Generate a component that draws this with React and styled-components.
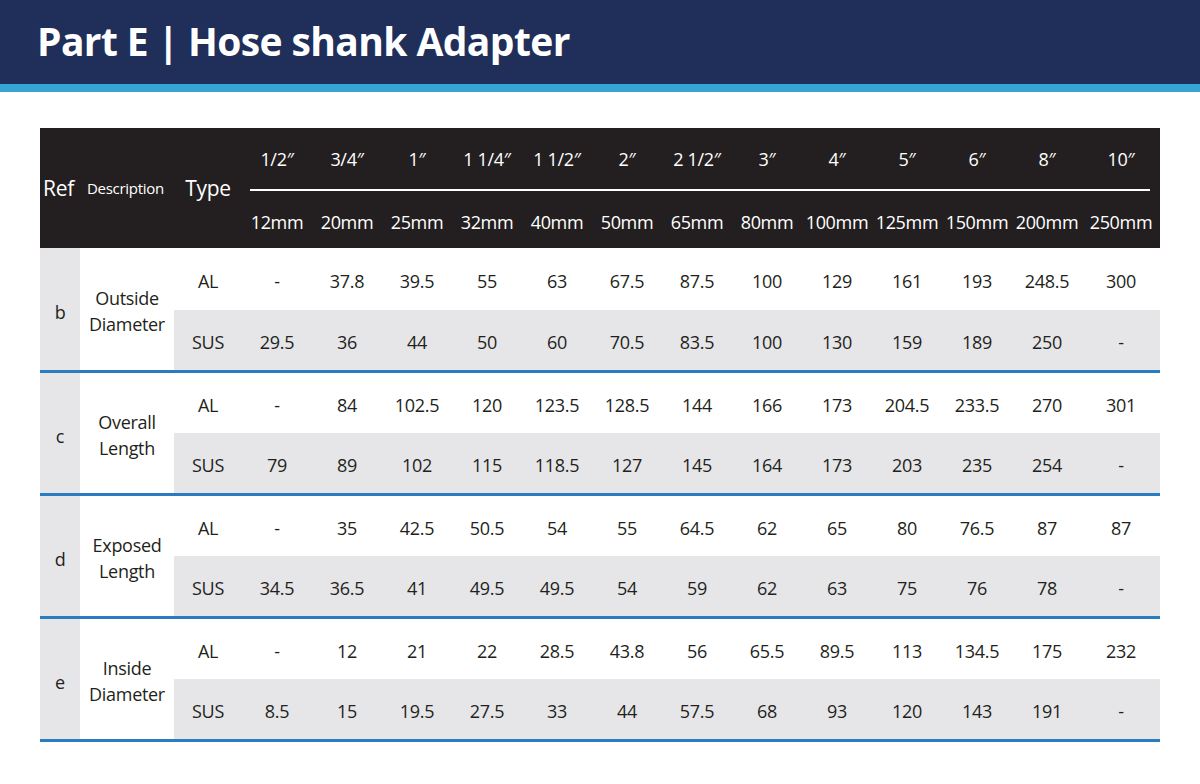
import styled, { createGlobalStyle } from "styled-components";

const GlobalStyle = createGlobalStyle`
  body {
    margin: 0;
    background: #ffffff;
    font-family: "Open Sans", "Noto Sans", sans-serif;
    color: #231f20;
  }
`;

const Page = styled.div`
  width: 1200px;
  min-height: 784px;
  background: #ffffff;
`;

const Banner = styled.header`
  height: 84px;
  background: #1f2f5a;
  border-bottom: 8px solid #34a5d5;
  display: flex;
  align-items: center;
  padding-left: 37px;
`;

const Title = styled.h1`
  margin: 0 0 3px;
  color: #ffffff;
  font-size: 39px;
  font-weight: 700;
  letter-spacing: -0.6px;
`;

const Wrap = styled.div`
  padding: 36px 40px 0;
`;

const Table = styled.table`
  width: 1120px;
  border-collapse: collapse;
  table-layout: fixed;
  font-size: 18px;
  letter-spacing: -0.3px;
`;

const Head = styled.thead`
  background: #231f20;
  color: #ffffff;
`;

const HeadCell = styled.th`
  box-sizing: border-box;
  font-weight: 400;
  font-size: ${(p) => p.$size || 18}px;
  text-align: ${(p) => p.$align || "center"};
  padding: 0;
  padding-left: ${(p) => p.$indent || 0}px;
  padding-top: ${(p) => p.$top || 0}px;
  height: ${(p) => p.$h || "auto"};
  vertical-align: middle;
  white-space: nowrap;
`;

const DividerCell = styled.th`
  padding: 0 10px 0 8px;
  height: 2px;
`;

const Divider = styled.div`
  height: 1.5px;
  background: #ffffff;
`;

const Group = styled.tbody`
  border-bottom: 3px solid #2a7bbf;
`;

const Cell = styled.td`
  box-sizing: border-box;
  padding: 4px 0 0;
  text-align: center;
  vertical-align: middle;
  height: ${(p) => p.$h}px;
  background: ${(p) => (p.$shade ? "#e6e6e8" : "#ffffff")};
  white-space: nowrap;
`;

const RefCell = styled.td`
  background: #e6e6e8;
  text-align: center;
  padding: 6px 0 0;
  font-size: 18px;
`;

const DescCell = styled.td`
  background: #ffffff;
  text-align: center;
  padding: 4px 0 0;
  line-height: 26px;
  font-size: 18px;
`;

const sizes = [
  ["1/2\u2033", "12mm"],
  ["3/4\u2033", "20mm"],
  ["1\u2033", "25mm"],
  ["1 1/4\u2033", "32mm"],
  ["1 1/2\u2033", "40mm"],
  ["2\u2033", "50mm"],
  ["2 1/2\u2033", "65mm"],
  ["3\u2033", "80mm"],
  ["4\u2033", "100mm"],
  ["5\u2033", "125mm"],
  ["6\u2033", "150mm"],
  ["8\u2033", "200mm"],
  ["10\u2033", "250mm"],
];

const groups = [
  {
    ref: "b",
    desc: ["Outside", "Diameter"],
    al: ["-", "37.8", "39.5", "55", "63", "67.5", "87.5", "100", "129", "161", "193", "248.5", "300"],
    sus: ["29.5", "36", "44", "50", "60", "70.5", "83.5", "100", "130", "159", "189", "250", "-"],
  },
  {
    ref: "c",
    desc: ["Overall", "Length"],
    al: ["-", "84", "102.5", "120", "123.5", "128.5", "144", "166", "173", "204.5", "233.5", "270", "301"],
    sus: ["79", "89", "102", "115", "118.5", "127", "145", "164", "173", "203", "235", "254", "-"],
  },
  {
    ref: "d",
    desc: ["Exposed", "Length"],
    al: ["-", "35", "42.5", "50.5", "54", "55", "64.5", "62", "65", "80", "76.5", "87", "87"],
    sus: ["34.5", "36.5", "41", "49.5", "49.5", "54", "59", "62", "63", "75", "76", "78", "-"],
  },
  {
    ref: "e",
    desc: ["Inside", "Diameter"],
    al: ["-", "12", "21", "22", "28.5", "43.8", "56", "65.5", "89.5", "113", "134.5", "175", "232"],
    sus: ["8.5", "15", "19.5", "27.5", "33", "44", "57.5", "68", "93", "120", "143", "191", "-"],
  },
];

const App = () => {
  return (
    <>
      <GlobalStyle />
      <Page>
        <Banner>
          <Title>Part E | Hose shank Adapter</Title>
        </Banner>
        <Wrap>
          <Table>
            <colgroup>
              <col style={{ width: 40 }} />
              <col style={{ width: 94 }} />
              <col style={{ width: 68 }} />
              {sizes.map((s, i) => (
                <col key={i} style={{ width: i === 12 ? 78 : 70 }} />
              ))}
            </colgroup>
            <Head>
              <tr>
                <HeadCell rowSpan={3} $size={21} $align="left" $indent={3}>
                  Ref
                </HeadCell>
                <HeadCell rowSpan={3} $size={15} $align="left" $indent={7}>
                  Description
                </HeadCell>
                <HeadCell rowSpan={3} $size={21}>
                  Type
                </HeadCell>
                {sizes.map((s, i) => (
                  <HeadCell key={i} $h="61px">
                    {s[0]}
                  </HeadCell>
                ))}
              </tr>
              <tr>
                <DividerCell colSpan={13}>
                  <Divider />
                </DividerCell>
              </tr>
              <tr>
                {sizes.map((s, i) => (
                  <HeadCell key={i} $h="57px" $top={5}>
                    {s[1]}
                  </HeadCell>
                ))}
              </tr>
            </Head>
            {groups.map((g) => (
              <Group key={g.ref}>
                <tr>
                  <RefCell rowSpan={2}>{g.ref}</RefCell>
                  <DescCell rowSpan={2}>
                    {g.desc[0]}
                    <br />
                    {g.desc[1]}
                  </DescCell>
                  <Cell $h={62}>AL</Cell>
                  {g.al.map((v, i) => (
                    <Cell key={i} $h={62}>
                      {v}
                    </Cell>
                  ))}
                </tr>
                <tr>
                  <Cell $h={61} $shade>
                    SUS
                  </Cell>
                  {g.sus.map((v, i) => (
                    <Cell key={i} $h={61} $shade>
                      {v}
                    </Cell>
                  ))}
                </tr>
              </Group>
            ))}
          </Table>
        </Wrap>
      </Page>
    </>
  );
};

export default App;
